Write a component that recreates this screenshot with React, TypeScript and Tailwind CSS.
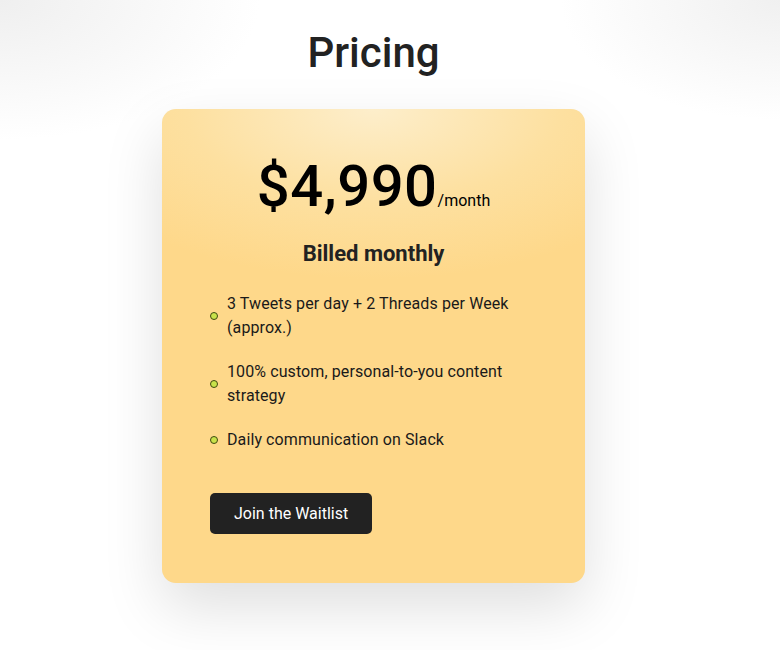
const features = [
  '3 Tweets per day + 2 Threads per Week (approx.)',
  '100% custom, personal-to-you content strategy',
  'Daily communication on Slack',
];

const App = () => {
  return (
    <div
      className="min-h-[650px] bg-white bg-[radial-gradient(ellipse_260px_140px_at_0%_0%,#efefef_0%,rgba(255,255,255,0)_100%),radial-gradient(ellipse_220px_120px_at_100%_0%,#f0f0f0_0%,rgba(255,255,255,0)_100%)] pt-8 pr-[33px] flex flex-col items-center"
      style={{ fontFamily: 'Roboto, "Liberation Sans", sans-serif' }}
    >
      <h1 className="text-[42px] leading-[42px] font-medium text-[#222222]">
        Pricing
      </h1>
      <div className="mt-[35px] w-[423px] rounded-[14px] bg-[radial-gradient(ellipse_340px_170px_at_50%_0%,#fdeecb_0%,#fde0a0_55%,#fed88a_100%)] bg-[#fed88a] shadow-[0_24px_60px_rgba(0,0,0,0.13)] px-12 pt-12 pb-[49px]">
        <div className="flex items-baseline justify-center">
          <span className="text-[58px] leading-[58px] font-medium text-black tracking-[0.5px]">
            $4,990
          </span>
          <span className="text-[16px] text-black">/month</span>
        </div>
        <p className="mt-[25px] text-center text-[22px] leading-[28px] font-bold text-[#222222]">
          Billed monthly
        </p>
        <ul className="mt-6 flex flex-col gap-5">
          {features.map((f) => (
            <li key={f} className="flex items-center">
              <span className="w-[8px] h-[8px] rounded-full border-[1.5px] border-[#3f4a10] bg-[#c8e24a] shrink-0 mr-[9px]" />
              <span className="text-[16px] leading-[24px] text-[#1a1a1a] tracking-[0.1px] pr-4">
                {f}
              </span>
            </li>
          ))}
        </ul>
        <button className="mt-[41px] h-[41px] px-6 rounded-[5px] bg-[#222222] text-white text-[16px]">
          Join the Waitlist
        </button>
      </div>
    </div>
  );
};

export default App;
